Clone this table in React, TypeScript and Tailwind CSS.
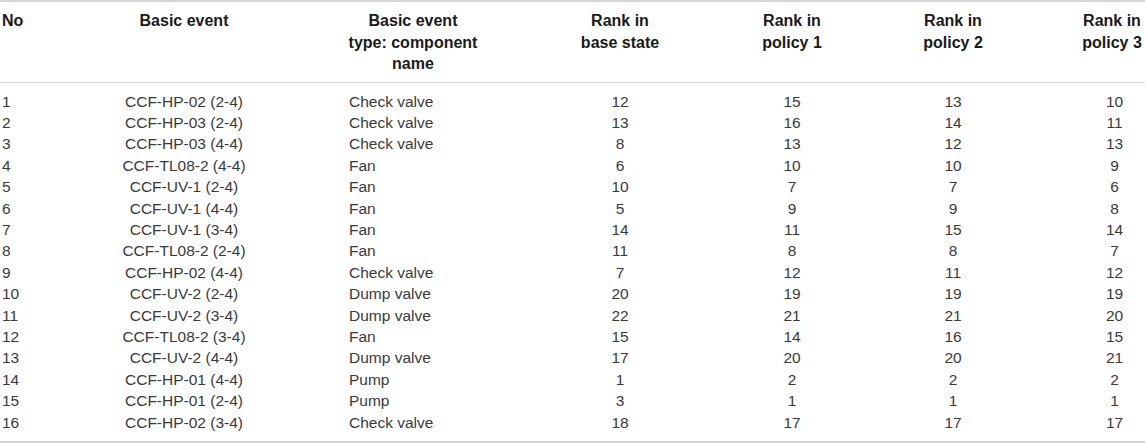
import React from "react";

type Row = [string, string, string, string, string, string, string];

const rows: Row[] = [
  ["1", "CCF-HP-02 (2-4)", "Check valve", "12", "15", "13", "10"],
  ["2", "CCF-HP-03 (2-4)", "Check valve", "13", "16", "14", "11"],
  ["3", "CCF-HP-03 (4-4)", "Check valve", "8", "13", "12", "13"],
  ["4", "CCF-TL08-2 (4-4)", "Fan", "6", "10", "10", "9"],
  ["5", "CCF-UV-1 (2-4)", "Fan", "10", "7", "7", "6"],
  ["6", "CCF-UV-1 (4-4)", "Fan", "5", "9", "9", "8"],
  ["7", "CCF-UV-1 (3-4)", "Fan", "14", "11", "15", "14"],
  ["8", "CCF-TL08-2 (2-4)", "Fan", "11", "8", "8", "7"],
  ["9", "CCF-HP-02 (4-4)", "Check valve", "7", "12", "11", "12"],
  ["10", "CCF-UV-2 (2-4)", "Dump valve", "20", "19", "19", "19"],
  ["11", "CCF-UV-2 (3-4)", "Dump valve", "22", "21", "21", "20"],
  ["12", "CCF-TL08-2 (3-4)", "Fan", "15", "14", "16", "15"],
  ["13", "CCF-UV-2 (4-4)", "Dump valve", "17", "20", "20", "21"],
  ["14", "CCF-HP-01 (4-4)", "Pump", "1", "2", "2", "2"],
  ["15", "CCF-HP-01 (2-4)", "Pump", "3", "1", "1", "1"],
  ["16", "CCF-HP-02 (3-4)", "Check valve", "18", "17", "17", "17"],
];

const cols = "grid grid-cols-[60px_248px_210px_204px_140px_182px_101px]";

export default function App() {
  return (
    <div
      className="w-[1145px] h-[444px] bg-white"
      style={{ fontFamily: '"Liberation Sans", Arial, Helvetica, sans-serif' }}
    >
      <div className="border-t-2 border-b-2 border-[#d4d4d4]">
        {/* header */}
        <div className={`${cols} pt-[8px] pb-[7px] text-[16px] leading-[21.5px] font-bold text-[#1a1a1a] border-b border-[#d4d4d4]`}>
          <div className="pl-[2px]">No</div>
          <div className="text-center">Basic event</div>
          <div className="text-center">
            Basic event
            <br />
            type: component
            <br />
            name
          </div>
          <div className="text-center">
            Rank in
            <br />
            base state
          </div>
          <div className="text-center whitespace-nowrap">
            Rank in
            <br />
            policy 1
          </div>
          <div className="text-center whitespace-nowrap">
            Rank in
            <br />
            policy 2
          </div>
          <div className="pl-[36px] pr-[1px] text-center whitespace-nowrap">
            Rank in
            <br />
            policy 3
          </div>
        </div>

        {/* body */}
        <div className="pt-[8px] pb-[8px] text-[15.5px] text-[#3a3a3a] leading-[21.4px]">
          {rows.map((r) => (
            <div key={r[0]} className={cols}>
              <div className="pl-[2px]">{r[0]}</div>
              <div className="text-center">{r[1]}</div>
              <div className="pl-[41px]">{r[2]}</div>
              <div className="text-center">{r[3]}</div>
              <div className="text-center">{r[4]}</div>
              <div className="text-center">{r[5]}</div>
              <div className="pl-[40px] text-center">{r[6]}</div>
            </div>
          ))}
        </div>
      </div>
    </div>
  );
}
